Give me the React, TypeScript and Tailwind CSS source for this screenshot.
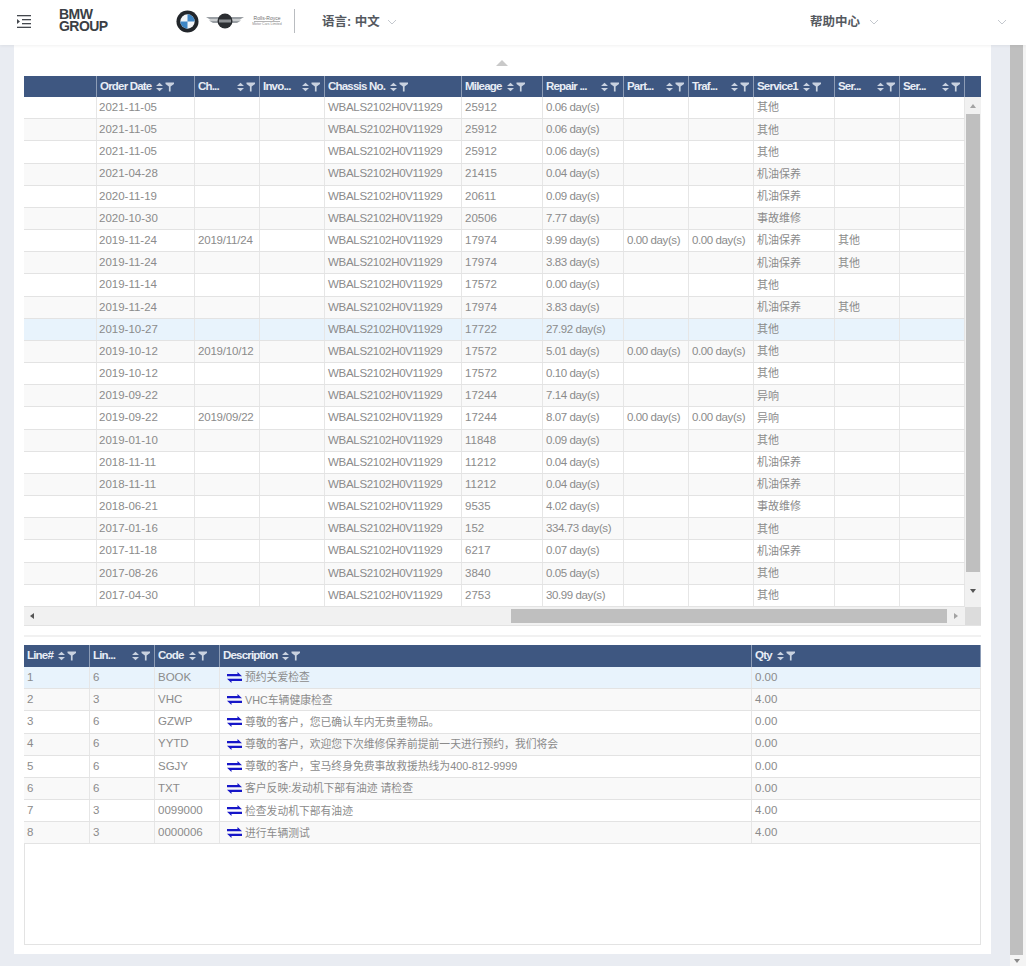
import React from "react";

const topCols = "grid-cols-[73px_98px_65px_65px_137px_81px_81px_65px_65px_81px_65px_65px]";
const lineCols = "grid-cols-[66px_65px_65px_532px_229px]";

const topHeaders = ["", "Order Date", "Ch...", "Invo...", "Chassis No.", "Mileage", "Repair ...", "Part...", "Traf...", "Service1", "Ser...", "Ser..."];
const lineHeaders = ["Line#", "Lin...", "Code", "Description", "Qty"];

const orders = [
  ["2021-11-05", "", "25912", "0.06 day(s)", "", "", "其他", ""],
  ["2021-11-05", "", "25912", "0.06 day(s)", "", "", "其他", ""],
  ["2021-11-05", "", "25912", "0.06 day(s)", "", "", "其他", ""],
  ["2021-04-28", "", "21415", "0.04 day(s)", "", "", "机油保养", ""],
  ["2020-11-19", "", "20611", "0.09 day(s)", "", "", "机油保养", ""],
  ["2020-10-30", "", "20506", "7.77 day(s)", "", "", "事故维修", ""],
  ["2019-11-24", "2019/11/24", "17974", "9.99 day(s)", "0.00 day(s)", "0.00 day(s)", "机油保养", "其他"],
  ["2019-11-24", "", "17974", "3.83 day(s)", "", "", "机油保养", "其他"],
  ["2019-11-14", "", "17572", "0.00 day(s)", "", "", "其他", ""],
  ["2019-11-24", "", "17974", "3.83 day(s)", "", "", "机油保养", "其他"],
  ["2019-10-27", "", "17722", "27.92 day(s)", "", "", "其他", ""],
  ["2019-10-12", "2019/10/12", "17572", "5.01 day(s)", "0.00 day(s)", "0.00 day(s)", "其他", ""],
  ["2019-10-12", "", "17572", "0.10 day(s)", "", "", "其他", ""],
  ["2019-09-22", "", "17244", "7.14 day(s)", "", "", "异响", ""],
  ["2019-09-22", "2019/09/22", "17244", "8.07 day(s)", "0.00 day(s)", "0.00 day(s)", "异响", ""],
  ["2019-01-10", "", "11848", "0.09 day(s)", "", "", "其他", ""],
  ["2018-11-11", "", "11212", "0.04 day(s)", "", "", "机油保养", ""],
  ["2018-11-11", "", "11212", "0.04 day(s)", "", "", "机油保养", ""],
  ["2018-06-21", "", "9535", "4.02 day(s)", "", "", "事故维修", ""],
  ["2017-01-16", "", "152", "334.73 day(s)", "", "", "其他", ""],
  ["2017-11-18", "", "6217", "0.07 day(s)", "", "", "机油保养", ""],
  ["2017-08-26", "", "3840", "0.05 day(s)", "", "", "其他", ""],
  ["2017-04-30", "", "2753", "30.99 day(s)", "", "", "其他", ""],
];

const lines = [
  ["1", "6", "BOOK", "预约关爱检查", "0.00"],
  ["2", "3", "VHC", "VHC车辆健康检查", "4.00"],
  ["3", "6", "GZWP", "尊敬的客户，您已确认车内无贵重物品。", "0.00"],
  ["4", "6", "YYTD", "尊敬的客户，欢迎您下次维修保养前提前一天进行预约，我们将会", "0.00"],
  ["5", "6", "SGJY", "尊敬的客户，宝马终身免费事故救援热线为400-812-9999", "0.00"],
  ["6", "6", "TXT", "客户反映:发动机下部有油迹 请检查", "0.00"],
  ["7", "3", "0099000", "检查发动机下部有油迹", "4.00"],
  ["8", "3", "0000006", "进行车辆测试", "4.00"],
];

function SortFilter() {
  return (
    <svg width="19" height="10" viewBox="0 0 19 10" className="shrink-0" fill="#c9d2e0">
      <path d="M0 4 L3.5 0.8 L7 4Z M0 6 L7 6 L3.5 9.2Z" />
      <path d="M9.5 0.5 H18 V2 L14.6 4.4 V9.5 H12.9 V4.4 L9.5 2Z" />
    </svg>
  );
}

function Chevron() {
  return (
    <svg width="10" height="6" viewBox="0 0 10 6" fill="none" stroke="#c4c8ce" strokeWidth="1">
      <path d="M1 1 L5 5 L9 1" />
    </svg>
  );
}

function SwapArrows() {
  return (
    <svg width="15" height="11" viewBox="0 0 15 11" className="shrink-0" fill="#1616c8">
      <path d="M0 2 H10.5 V0 L15 4.2 H0Z" />
      <path d="M15 6.8 V9 H4.5 V11 L0 6.8Z" />
    </svg>
  );
}

function HeaderRow({ cols, labels, height }: { cols: string; labels: string[]; height: string }) {
  return (
    <div className={`grid bg-[#3e5781] ${height} ${cols}`}>
      {labels.map((label, i) => (
        <div key={i} className="flex items-center gap-[5px] border-r border-[#8c9cb6] pl-[3px] pr-[3px] overflow-hidden">
          {label && (
            <span className="text-[11.5px] font-semibold tracking-[-0.8px] text-[#e8edf5] whitespace-nowrap">{label}</span>
          )}
          {label && label.endsWith("...") && <span className="ml-auto" />}
          {label && <SortFilter />}
        </div>
      ))}
    </div>
  );
}

function Cell({ children, first, tight }: { children?: React.ReactNode; first?: boolean; tight?: string }) {
  return (
    <div className={`flex items-center border-r border-[#e6e6e6] text-[#8b8b8b] whitespace-nowrap overflow-hidden ${first ? "pl-[2px]" : "pl-[3px]"} ${tight ?? "text-[11.5px]"}`}>
      {children}
    </div>
  );
}

function VerticalBar() {
  return (
    <div className="w-4 flex flex-col items-center bg-[#f1f1f1]">
      <div className="h-[17px] flex items-center justify-center">
        <div className="w-0 h-0 border-x-[3.5px] border-x-transparent border-b-[4px] border-b-[#a3a3a3]" />
      </div>
      <div className="w-[14px] h-[458px] bg-[#bfbfbf]" />
      <div className="flex-1 flex items-center justify-center pt-[2px]">
        <div className="w-0 h-0 border-x-[3.5px] border-x-transparent border-t-[4px] border-t-[#555]" />
      </div>
    </div>
  );
}

function HorizontalBar() {
  return (
    <div className="flex h-[19px] bg-[#f1f1f1] border-b border-[#e3e3e3]">
      <div className="w-[487px] pl-[6px] flex items-center">
        <div className="w-0 h-0 border-y-[3.5px] border-y-transparent border-r-[4px] border-r-[#555]" />
      </div>
      <div className="w-[436px] my-[2px] bg-[#bfbfbf]" />
      <div className="w-[18px] flex items-center justify-center">
        <div className="w-0 h-0 border-y-[3.5px] border-y-transparent border-l-[4px] border-l-[#a3a3a3]" />
      </div>
      <div className="w-4 bg-[#dcdcdc]" />
    </div>
  );
}

function Logos() {
  return (
    <div className="flex items-center mt-[-3px] w-[108px]">
      <svg width="23" height="23" viewBox="0 0 24 24" className="shrink-0">
        <circle cx="12" cy="12" r="11.5" fill="#22262b" />
        <circle cx="12" cy="12" r="7.5" fill="#f2f5f8" />
        <path d="M12 12 V4.5 A7.5 7.5 0 0 1 19.5 12Z M12 12 V19.5 A7.5 7.5 0 0 1 4.5 12Z" fill="#3f86c4" />
      </svg>
      <svg width="38" height="16" viewBox="0 0 38 16" className="shrink-0 ml-[7px]">
        <path d="M0 4 H13 V6.5 H4Z M3 7.5 H13 V10 H7Z M25 4 H38 L34 6.5 H25Z M25 7.5 H35 L31 10 H25Z" fill="#9a9fa4" />
        <circle cx="19" cy="8" r="7.5" fill="#2b2e32" />
        <rect x="13" y="6.5" width="12" height="3" fill="#8c8f93" />
      </svg>
      <div className="flex flex-col items-center w-[34px] leading-none ml-[6px] shrink-0">
        <span className="text-[5px] text-[#6f6f6f] border-b border-[#b5b5b5] whitespace-nowrap">Rolls-Royce</span>
        <span className="text-[3.5px] text-[#8c8c8c] whitespace-nowrap mt-[1px]">Motor Cars Limited</span>
      </div>
    </div>
  );
}

function Header() {
  return (
    <header className="h-[45px] bg-white flex items-center shadow-[0_1px_3px_rgba(0,0,0,0.06)] relative z-10 shrink-0">
      <svg width="14" height="13" viewBox="0 0 14 13" className="ml-[17px] mt-[-3px]" fill="#44484e">
        <rect x="0" y="0" width="14" height="1.3" />
        <rect x="5" y="4" width="9" height="1.3" />
        <rect x="5" y="8" width="9" height="1.3" />
        <rect x="0" y="11.7" width="14" height="1.3" />
        <path d="M0 4 L3 6.5 L0 9Z" />
      </svg>
      <div className="ml-[28px] w-[117px] text-[14px] leading-[12px] font-bold tracking-[-0.55px] text-[#3b3f45] mt-[-5px]">
        BMW
        <br />
        GROUP
      </div>
      <Logos />
      <div className="ml-[10px] mt-[-4px] w-px h-[24px] bg-[#b9bcc0]" />
      <span className="ml-[27px] text-[12.5px] font-semibold text-[#55595f]">语言: 中文</span>
      <span className="ml-[7px] mt-[-2px]"><Chevron /></span>
      <span className="ml-auto text-[12.5px] font-semibold text-[#55595f]">帮助中心</span>
      <span className="ml-[9px] mt-[-2px]"><Chevron /></span>
      <span className="ml-[118px] mr-[19px] mt-[-2px]"><Chevron /></span>
    </header>
  );
}

export default function App() {
  return (
    <div className="w-[1026px] h-[966px] overflow-hidden flex flex-col bg-[#e9ecf2] font-['Liberation_Sans','Noto_Sans_CJK_SC',sans-serif]">
      <Header />
      <div className="flex h-[921px]">
        <main className="ml-[14px] w-[977px] h-[909px] bg-white px-[10px] flex flex-col">
          <div className="h-[31px] flex items-center justify-center shrink-0">
            <div className="w-0 h-0 border-x-[6px] border-x-transparent border-b-[6px] border-b-[#c9c9c9] mt-[4px] ml-[-1px]" />
          </div>

          <section className="w-[957px]">
            <div className="flex">
              <div className="w-[941px]">
                <HeaderRow cols={topCols} labels={topHeaders} height="h-[21px]" />
              </div>
              <div className="w-4 bg-[#3e5781]" />
            </div>
            <div className="flex h-[510px]">
              <div className="w-[941px]">
                {orders.map((row, i) => (
                  <div
                    key={i}
                    className={`grid h-[22.18px] border-b border-[#e3e3e3] ${topCols} ${i === 10 ? "bg-[#e8f3fc]" : i % 2 ? "bg-[#f9f9f9]" : "bg-white"}`}
                  >
                    <Cell />
                    <Cell first>{row[0]}</Cell>
                    <Cell tight="text-[11.5px] tracking-[-0.2px]">{row[1]}</Cell>
                    <Cell />
                    <Cell tight="text-[11.5px] tracking-[-0.3px]">WBALS2102H0V11929</Cell>
                    <Cell>{row[2]}</Cell>
                    <Cell tight="text-[11.5px] tracking-[-0.4px]">{row[3]}</Cell>
                    <Cell tight="text-[11.5px] tracking-[-0.4px]">{row[4]}</Cell>
                    <Cell tight="text-[11.5px] tracking-[-0.4px]">{row[5]}</Cell>
                    <Cell tight="text-[11px]">{row[6]}</Cell>
                    <Cell tight="text-[11px]">{row[7]}</Cell>
                    <Cell />
                  </div>
                ))}
              </div>
              <VerticalBar />
            </div>
            <HorizontalBar />
          </section>

          <div className="h-[2px] bg-[#f1f1f1] mt-[9px] mb-[8px]" />

          <section className="w-[957px] h-[300px] border-b border-x border-[#e3e3e3] box-border">
            <div className="-mx-px">
              <HeaderRow cols={lineCols} labels={lineHeaders} height="h-[22px]" />
            </div>
            <div className="-mx-px">
              {lines.map((row, i) => (
                <div
                  key={i}
                  className={`grid h-[22.18px] border-b border-[#e3e3e3] ${lineCols} ${i === 0 ? "bg-[#e8f3fc]" : i % 2 ? "bg-[#f9f9f9]" : "bg-white"}`}
                >
                  <Cell>{row[0]}</Cell>
                  <Cell>{row[1]}</Cell>
                  <Cell>{row[2]}</Cell>
                  <Cell>
                    <span className="ml-[4px] mr-[3px] flex"><SwapArrows /></span>
                    <span className="text-[10.8px]">{row[3]}</span>
                  </Cell>
                  <Cell>{row[4]}</Cell>
                </div>
              ))}
            </div>
          </section>
        </main>

        <div className="ml-[19px] w-[13px] flex flex-col">
          <div className="h-[910px] bg-[#bfbfbf]" />
          <div className="flex-1 bg-[#f4f4f4] flex items-center justify-center">
            <div className="w-0 h-0 border-x-[3.5px] border-x-transparent border-t-[4px] border-t-[#8a8a8a]" />
          </div>
        </div>
        <div className="w-[3px] bg-[#f4f4f4]" />
      </div>
    </div>
  );
}
